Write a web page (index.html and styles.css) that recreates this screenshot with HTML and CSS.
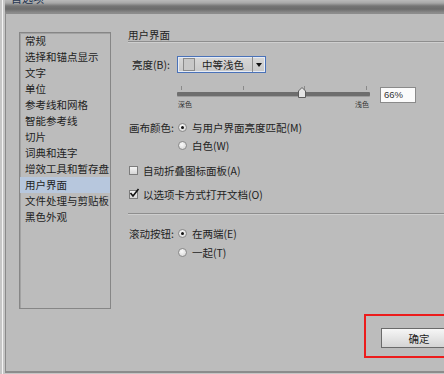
FILE: index.html
```html
<!DOCTYPE html>
<html lang="zh-CN">
<head>
<meta charset="utf-8">
<title>首选项</title>
<link rel="stylesheet" href="styles.css">
</head>
<body>
<div class="window">
  <div class="titlebar"><span class="title">首选项</span></div>
  <div class="frame">
    <div class="content">
      <ul class="cats">
        <li>常规</li>
        <li>选择和锚点显示</li>
        <li>文字</li>
        <li>单位</li>
        <li>参考线和网格</li>
        <li>智能参考线</li>
        <li>切片</li>
        <li>词典和连字</li>
        <li>增效工具和暂存盘</li>
        <li class="selected">用户界面</li>
        <li>文件处理与剪贴板</li>
        <li>黑色外观</li>
      </ul>
      <section class="panel">
        <h2 class="panel-title">用户界面</h2>
        <div class="bright">
          <span class="bright-label">亮度(B):</span>
          <div class="select">
            <span class="swatch"></span>
            <span class="select-text">中等浅色</span>
            <span class="select-arrow"><span class="tri"></span></span>
          </div>
        </div>
        <div class="slider-row">
          <div class="slider">
            <div class="ticks"><i></i><i></i><i></i><i></i></div>
            <div class="track">
              <svg class="thumb" style="left:65%" width="8" height="11" viewBox="0 0 8 11"><path d="M0.5 4 L4 0.5 L7.5 4 V10.5 H0.5 Z" fill="#e4e4e4" stroke="#5c5c5c" stroke-width="1"/></svg>
            </div>
            <div class="slider-labels"><span>深色</span><span>浅色</span></div>
          </div>
          <div class="value">66%</div>
        </div>
        <div class="group canvas">
          <div class="opt-row"><span class="opt-label">画布颜色:</span><span class="radio on"></span><span>与用户界面亮度匹配(M)</span></div>
          <div class="opt-row"><span class="opt-label"></span><span class="radio"></span><span>白色(W)</span></div>
        </div>
        <div class="check-row first"><span class="check"></span><span>自动折叠图标面板(A)</span></div>
        <div class="check-row"><span class="check"><svg width="11" height="11" viewBox="0 0 11 11"><path d="M1.5 5 L4 8 L9.5 1" fill="none" stroke="#111" stroke-width="1.6"/></svg></span><span>以选项卡方式打开文档(O)</span></div>
        <hr class="sep">
        <div class="group scroll">
          <div class="opt-row tall"><span class="opt-label">滚动按钮:</span><span class="radio on"></span><span>在两端(E)</span></div>
          <div class="opt-row tall"><span class="opt-label"></span><span class="radio"></span><span>一起(T)</span></div>
        </div>
      </section>
    </div>
    <div class="footer">
      <div class="mark"><button class="ok">确定</button></div>
    </div>
  </div>
</div>
</body>
</html>
```
FILE: styles.css
```css
html, body {
  margin: 0;
  padding: 0;
}
body {
  width: 444px;
  height: 374px;
  overflow: hidden;
  background: #c6c6c6;
  font-family: "Noto Sans CJK SC", "Liberation Sans", sans-serif;
  font-size: 10.5px;
  color: #1e1e1e;
}
.window {
  height: 374px;
  margin-left: 2px;
  border-left: 1px solid #f4f4f4;
  display: flex;
  flex-direction: column;
}
.titlebar {
  height: 13px;
  flex: none;
  overflow: hidden;
  margin-left: 2px;
  background: linear-gradient(#bababa 0, #a8a8a8 3px, #757575 6px, #6c6c6c 9px, #8e8e8e 13px);
}
.title {
  display: block;
  margin: -8px 0 0 6px;
  font-size: 11px;
  line-height: 13px;
  color: #243450;
}
.frame {
  flex: 1;
  margin-left: 2px;
  margin-bottom: 1px;
  border-left: 1px solid #8a8a8a;
  border-top: 1px solid #8c8c8c;
  border-bottom: 2px solid #8c8c8c;
  background: #bcbcbc;
  overflow: hidden;
  display: flex;
  flex-direction: column;
}
.content {
  height: 295px;
  flex: none;
  display: flex;
  align-items: flex-start;
}
.cats {
  list-style: none;
  margin: 18px 0 0 13px;
  padding: 0;
  width: 90px;
  height: 275px;
  flex: none;
  border: 1px solid #868686;
  box-shadow: inset 1px 1px 0 #a2a2a2;
}
.cats li {
  line-height: 16px;
  height: 16px;
  padding-left: 5px;
  white-space: nowrap;
}
.cats li.selected {
  background: #b7c7dd;
}
.panel {
  flex: 1;
  min-width: 0;
  margin: 14px 0 0 17px;
  white-space: nowrap;
}
.panel-title {
  margin: 0;
  font-size: 10.5px;
  font-weight: normal;
  line-height: 13px;
  border-bottom: 1px solid #8e8e8e;
  box-shadow: 0 1px 0 #cfcfcf;
}
.bright {
  display: flex;
  align-items: center;
  margin-top: 14px;
  padding-left: 4px;
  height: 17px;
}
.bright-label {
  width: 45px;
}
.select {
  width: 87px;
  height: 15px;
  border: 1px solid #4a72b8;
  box-shadow: inset 0 0 0 1px #e6ecf6;
  background: linear-gradient(#d8d8d8, #c8c8c8);
  display: flex;
  align-items: center;
}
.swatch {
  width: 10px;
  height: 11px;
  border: 1px solid #8a8a8a;
  background: #c8c8c8;
  margin-left: 5px;
}
.select-text {
  margin-left: 7px;
  width: 50px;
}
.select-arrow {
  flex: 1;
  align-self: stretch;
  border-left: 1px solid #8c8c8c;
  display: flex;
  align-items: center;
  justify-content: center;
}
.tri {
  width: 0;
  height: 0;
  border-left: 3px solid transparent;
  border-right: 3px solid transparent;
  border-top: 4px solid #111;
}
.slider-row {
  display: flex;
  align-items: flex-start;
  margin-top: 13px;
  padding-left: 49px;
}
.slider {
  width: 193px;
}
.ticks {
  display: flex;
  justify-content: space-between;
  padding: 0 3px 0 4px;
  height: 4px;
}
.ticks i {
  width: 1px;
  height: 4px;
  background: #8a8a8a;
}
.track {
  position: relative;
  margin-top: 2px;
  height: 4px;
  background: #6e6e6e;
  border-radius: 1px;
  box-shadow: 0 1px 0 #9c9c9c;
}
.thumb {
  position: absolute;
  top: -5px;
  margin-left: -4px;
}
.slider-labels {
  display: flex;
  justify-content: space-between;
  margin-top: 3px;
  padding: 0 1px 0 1px;
  font-size: 7px;
  line-height: 10px;
  color: #333;
}
.value {
  margin-left: 10px;
  margin-top: 1px;
  width: 31px;
  height: 14px;
  padding-left: 3px;
  border: 1px solid #8a8a8a;
  background: #fbfbfb;
  font-family: "Liberation Sans", sans-serif;
  font-size: 9.5px;
  line-height: 14px;
  color: #333;
}
.canvas {
  margin-top: 9px;
}
.opt-row {
  display: flex;
  align-items: center;
  height: 18px;
  padding-left: 1px;
}
.opt-row.tall {
  height: 19px;
}
.opt-label {
  width: 49px;
}
.radio {
  width: 7px;
  height: 7px;
  border: 1px solid #8a8a8a;
  border-radius: 50%;
  background: radial-gradient(circle at 40% 35%, #fafafa, #d2d2d2);
  margin-right: 5px;
  display: flex;
  align-items: center;
  justify-content: center;
}
.radio.on::after {
  content: "";
  width: 3px;
  height: 3px;
  border-radius: 50%;
  background: #111;
}
.check-row {
  display: flex;
  align-items: center;
  height: 18px;
  padding-left: 1px;
  margin-top: 6px;
}
.check-row.first {
  margin-top: 7px;
}
.check {
  position: relative;
  width: 7px;
  height: 7px;
  border: 1px solid #7c7c7c;
  background: linear-gradient(#f4f4f4, #d6d6d6);
  margin-right: 5px;
}
.check svg {
  position: absolute;
  left: -1px;
  top: -3px;
}
.sep {
  border: none;
  height: 1px;
  margin: 10px 0 0 0;
  background: #8e8e8e;
  box-shadow: 0 1px 0 #cecece;
}
.scroll {
  margin-top: 10px;
}
.footer {
  margin-top: 5px;
  display: flex;
}
.mark {
  margin-left: 358px;
  flex: none;
  width: 100px;
  border: 2px solid #ec1c1c;
  padding: 12px 0 8px 15px;
}
.ok {
  display: block;
  width: 76px;
  height: 20px;
  padding: 0;
  border: 1px solid #6a6a6a;
  background: linear-gradient(#f6f6f6, #d4d4d4);
  font-family: "Noto Sans CJK SC", sans-serif;
  font-size: 10.5px;
  color: #222;
  text-align: center;
}
```
